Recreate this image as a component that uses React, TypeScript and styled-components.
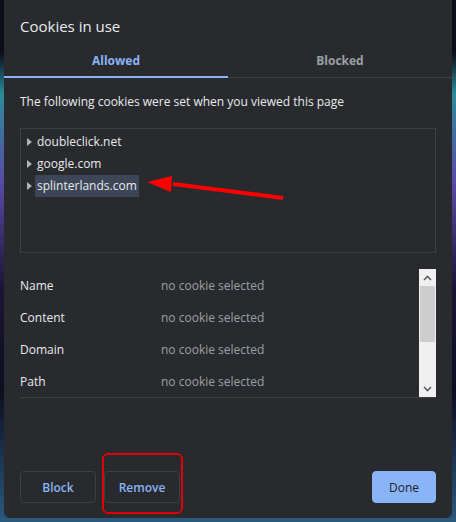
import React from 'react';
import styled, { createGlobalStyle } from 'styled-components';

const GlobalStyle = createGlobalStyle`
  html, body {
    margin: 0;
    padding: 0;
  }
  body {
    font-family: "Open Sans", "Noto Sans", sans-serif;
    background: linear-gradient(180deg, #0b0d1a 0%, #0b0d1a 10%, #2a8c9c 18%, #5a4aa8 35%, #1a1535 55%, #0e0d22 75%, #2a5a80 100%);
    height: 522px;
    overflow: hidden;
  }
`;

const Page = styled.div`
  position: relative;
  width: 456px;
  height: 522px;
  padding: 0 4px 4px;
  box-sizing: border-box;
`;

const Dialog = styled.div`
  height: 518px;
  background: #292a2d;
  border-radius: 0 0 6px 6px;
  display: flex;
  flex-direction: column;
  color: #e8eaed;
  font-size: 12px;
`;

const Title = styled.h1`
  margin: 0;
  padding: 16px 16px 0;
  font-size: 15px;
  font-weight: 400;
  line-height: 20px;
`;

const Tabs = styled.div`
  display: flex;
  margin-top: 17px;
  border-bottom: 1px solid #3c4043;
`;

const Tab = styled.div<{ $active?: boolean }>`
  flex: 1;
  text-align: center;
  font-weight: 700;
  font-size: 12px;
  line-height: 16px;
  padding-bottom: 7px;
  color: ${p => (p.$active ? '#8ab4f8' : '#9aa0a6')};
  border-bottom: 2px solid ${p => (p.$active ? '#8ab4f8' : 'transparent')};
  margin-bottom: -1px;
`;

const Body = styled.div`
  padding: 0 16px;
  display: flex;
  flex-direction: column;
  flex: 1;
`;

const Intro = styled.p`
  margin: 15px 0 0;
  line-height: 18px;
`;

const Tree = styled.div`
  margin-top: 17px;
  height: 125px;
  border: 1px solid #3c4043;
  padding: 2px 0 0 6px;
  box-sizing: border-box;
  display: flex;
  flex-direction: column;
  align-items: flex-start;
`;

const TreeItem = styled.div`
  display: flex;
  align-items: center;
  height: 22px;
`;

const Caret = styled.span`
  width: 0;
  height: 0;
  border-top: 4px solid transparent;
  border-bottom: 4px solid transparent;
  border-left: 5px solid #b0b3b8;
  margin-right: 3px;
`;

const Label = styled.span<{ $selected?: boolean }>`
  line-height: 22px;
  padding: 0 2px;
  background: ${p => (p.$selected ? '#3d4657' : 'transparent')};
`;

const Details = styled.div`
  margin-top: 16px;
  display: flex;
  height: 129px;
  border-bottom: 1px solid #3c4043;
  box-sizing: border-box;
`;

const Rows = styled.div`
  flex: 1;
`;

const Row = styled.div`
  display: flex;
  height: 32px;
  align-items: center;
`;

const Key = styled.span`
  width: 141px;
`;

const Value = styled.span`
  color: #9aa0a6;
`;

const Scrollbar = styled.div`
  width: 17px;
  background: #f0f0f0;
  display: flex;
  flex-direction: column;
`;

const ScrollArrow = styled.div`
  height: 17px;
  display: flex;
  align-items: center;
  justify-content: center;
`;

const Thumb = styled.div`
  height: 56px;
  margin: 0 1px;
  background: #cdcdcd;
`;

const Track = styled.div`
  flex: 1;
`;

const Footer = styled.div`
  margin-top: auto;
  padding: 0 16px 15px;
  display: flex;
  gap: 8px;
`;

const Button = styled.button<{ $primary?: boolean }>`
  height: 32px;
  width: ${p => (p.$primary ? '64px' : '76px')};
  padding: 0;
  border-radius: 4px;
  font-family: inherit;
  font-size: 12px;
  font-weight: ${p => (p.$primary ? 400 : 600)};
  border: 1px solid ${p => (p.$primary ? '#8ab4f8' : '#3c4043')};
  background: ${p => (p.$primary ? '#8ab4f8' : 'transparent')};
  color: ${p => (p.$primary ? '#202124' : '#8ab4f8')};
  margin-left: ${p => (p.$primary ? 'auto' : '0')};
`;

const Highlight = styled.div`
  position: absolute;
  left: 102px;
  top: 453px;
  width: 81px;
  height: 61px;
  border: 2px solid #e00000;
  border-radius: 6px;
  box-sizing: border-box;
`;

const Arrow = styled.svg`
  position: absolute;
  left: 140px;
  top: 170px;
`;

const Chevron = ({ up }: { up?: boolean }) => (
  <svg width="9" height="6" viewBox="0 0 9 6">
    <path
      d={up ? 'M1 5 L4.5 1.5 L8 5' : 'M1 1 L4.5 4.5 L8 1'}
      fill="none"
      stroke="#606060"
      strokeWidth="1.6"
    />
  </svg>
);

const cookies = ['doubleclick.net', 'google.com', 'splinterlands.com'];
const fields = ['Name', 'Content', 'Domain', 'Path'];

export default function App() {
  return (
    <Page>
      <GlobalStyle />
      <Dialog>
        <Title>Cookies in use</Title>
        <Tabs>
          <Tab $active>Allowed</Tab>
          <Tab>Blocked</Tab>
        </Tabs>
        <Body>
          <Intro>The following cookies were set when you viewed this page</Intro>
          <Tree>
            {cookies.map((c, i) => (
              <TreeItem key={c}>
                <Caret />
                <Label $selected={i === 2}>{c}</Label>
              </TreeItem>
            ))}
          </Tree>
          <Details>
            <Rows>
              {fields.map(f => (
                <Row key={f}>
                  <Key>{f}</Key>
                  <Value>no cookie selected</Value>
                </Row>
              ))}
            </Rows>
            <Scrollbar>
              <ScrollArrow><Chevron up /></ScrollArrow>
              <Thumb />
              <Track />
              <ScrollArrow><Chevron /></ScrollArrow>
            </Scrollbar>
          </Details>
        </Body>
        <Footer>
          <Button>Block</Button>
          <Button>Remove</Button>
          <Button $primary>Done</Button>
        </Footer>
      </Dialog>
      <Highlight />
      <Arrow width="150" height="34" viewBox="0 0 150 34">
        <path d="M33 14 L143 28" stroke="#ff0000" strokeWidth="4" />
        <path d="M7 12 L32 6 L31 22 Z" fill="#ff0000" />
      </Arrow>
    </Page>
  );
}
